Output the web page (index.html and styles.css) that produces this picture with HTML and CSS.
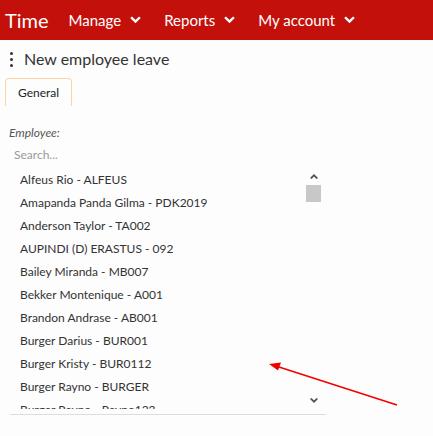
FILE: index.html
```html
<!DOCTYPE html>
<html>
<head>
<meta charset="utf-8">
<link rel="stylesheet" href="styles.css">
</head>
<body>
<header class="topbar">
  <span class="brand">Time</span>
  <nav class="menu">
    <span class="menu-item">Manage <svg class="chev" viewBox="0 0 10 7" width="10" height="7"><polyline points="1,1 5,5 9,1" /></svg></span>
    <span class="menu-item">Reports <svg class="chev" viewBox="0 0 10 7" width="10" height="7"><polyline points="1,1 5,5 9,1" /></svg></span>
    <span class="menu-item">My account <svg class="chev" viewBox="0 0 10 7" width="10" height="7"><polyline points="1,1 5,5 9,1" /></svg></span>
  </nav>
</header>
<main class="content">
  <div class="title-row">
    <span class="kebab"><i></i><i></i><i></i></span>
    <h1 class="title">New employee leave</h1>
  </div>
  <div class="tabs"><div class="tab">General</div></div>
  <div class="form">
    <div class="field-label">Employee:</div>
    <div class="search">Search...</div>
    <div class="listbox">
      <ul class="options">
        <li>Alfeus Rio - ALFEUS</li>
        <li>Amapanda Panda Gilma - PDK2019</li>
        <li>Anderson Taylor - TA002</li>
        <li>AUPINDI (D) ERASTUS - 092</li>
        <li>Bailey Miranda - MB007</li>
        <li>Bekker Montenique - A001</li>
        <li>Brandon Andrase - AB001</li>
        <li>Burger Darius - BUR001</li>
        <li>Burger Kristy - BUR0112</li>
        <li>Burger Rayno - BURGER</li>
        <li>Burger Rayno - Rayno123</li>
      </ul>
      <div class="scrollbar">
        <div class="sb-btn"><svg viewBox="0 0 8 5" width="8" height="5"><polygon points="0,4 4,0 8,4 6.5,5 4,2.5 1.5,5" /></svg></div>
        <div class="sb-thumb"></div>
        <div class="sb-track"></div>
        <div class="sb-btn"><svg viewBox="0 0 8 5" width="8" height="5"><polygon points="0,1 4,5 8,1 6.5,0 4,2.5 1.5,0" /></svg></div>
      </div>
    </div>
  </div>
</main>
<svg class="annotation" width="433" height="436" viewBox="0 0 433 436">
  <line x1="397" y1="405" x2="279" y2="367" stroke="#f20000" stroke-width="1.6" />
  <polygon points="269,364 281,362.5 278,370.5" fill="#f20000" />
</svg>
</body>
</html>
```
FILE: styles.css
```css
html, body {
  margin: 0;
  padding: 0;
  background: #fdfdfd;
  font-family: Lato, "Noto Sans", sans-serif;
  color: #333;
}
.topbar {
  height: 40px;
  background: #c4100a;
  display: flex;
  align-items: center;
  padding-left: 5px;
  color: #fff;
}
.brand {
  font-size: 20px;
  margin-right: 20px;
  line-height: 1;
}
.menu {
  display: flex;
  gap: 23px;
}
.menu-item {
  font-size: 15px;
  display: flex;
  align-items: center;
  gap: 9px;
}
.chev {
  width: 11px;
  height: 8px;
}
.chev polyline {
  fill: none;
  stroke: #fff;
  stroke-width: 2.2;
}
.content {
  padding: 0 10px;
}
.title-row {
  display: flex;
  align-items: center;
  height: 22px;
  margin-top: 8px;
}
.kebab {
  display: flex;
  flex-direction: column;
  gap: 3px;
  width: 4px;
  margin-right: 10px;
}
.kebab i {
  display: block;
  width: 3px;
  height: 3px;
  background: #333;
  border-radius: 50%;
}
.title {
  margin: 0;
  font-size: 16px;
  font-weight: normal;
  color: #333;
  line-height: 22px;
}
.tabs {
  display: flex;
  margin-top: 8px;
  margin-left: -5px;
}
.tab {
  border: 1px solid #ffd3a6;
  border-bottom: none;
  border-radius: 4px 4px 0 0;
  padding: 6px 12px 5px;
  font-size: 12px;
  line-height: 16px;
  color: #222;
}
.field-label {
  margin-top: 19px;
  margin-left: -1px;
  font-size: 12px;
  line-height: 15px;
  font-style: italic;
  color: #555;
}
.search {
  margin-top: 7px;
  padding-left: 4px;
  font-size: 12px;
  line-height: 16px;
  color: #999;
}
.listbox {
  margin-top: 5px;
  width: 316px;
  display: flex;
  padding-bottom: 5px;
  border-bottom: 1px solid #dddddd;
}
.options {
  list-style: none;
  margin: 0;
  padding: 0;
  flex: 1;
  height: 241px;
  overflow: hidden;
}
.options li {
  height: 23px;
  line-height: 23px;
  padding-left: 10px;
  font-size: 12px;
  color: #333;
  white-space: nowrap;
}
.scrollbar {
  width: 17px;
  margin-right: 4px;
  height: 241px;
  display: flex;
  flex-direction: column;
  align-items: center;
}
.sb-btn {
  height: 17px;
  width: 17px;
  display: flex;
  align-items: center;
  justify-content: center;
}
.sb-btn polygon {
  fill: #505050;
}
.sb-thumb {
  width: 15px;
  height: 17px;
  background: #c8c8c8;
}
.sb-track {
  flex: 1;
}
.annotation {
  position: absolute;
  left: 0;
  top: 0;
  pointer-events: none;
}
```
